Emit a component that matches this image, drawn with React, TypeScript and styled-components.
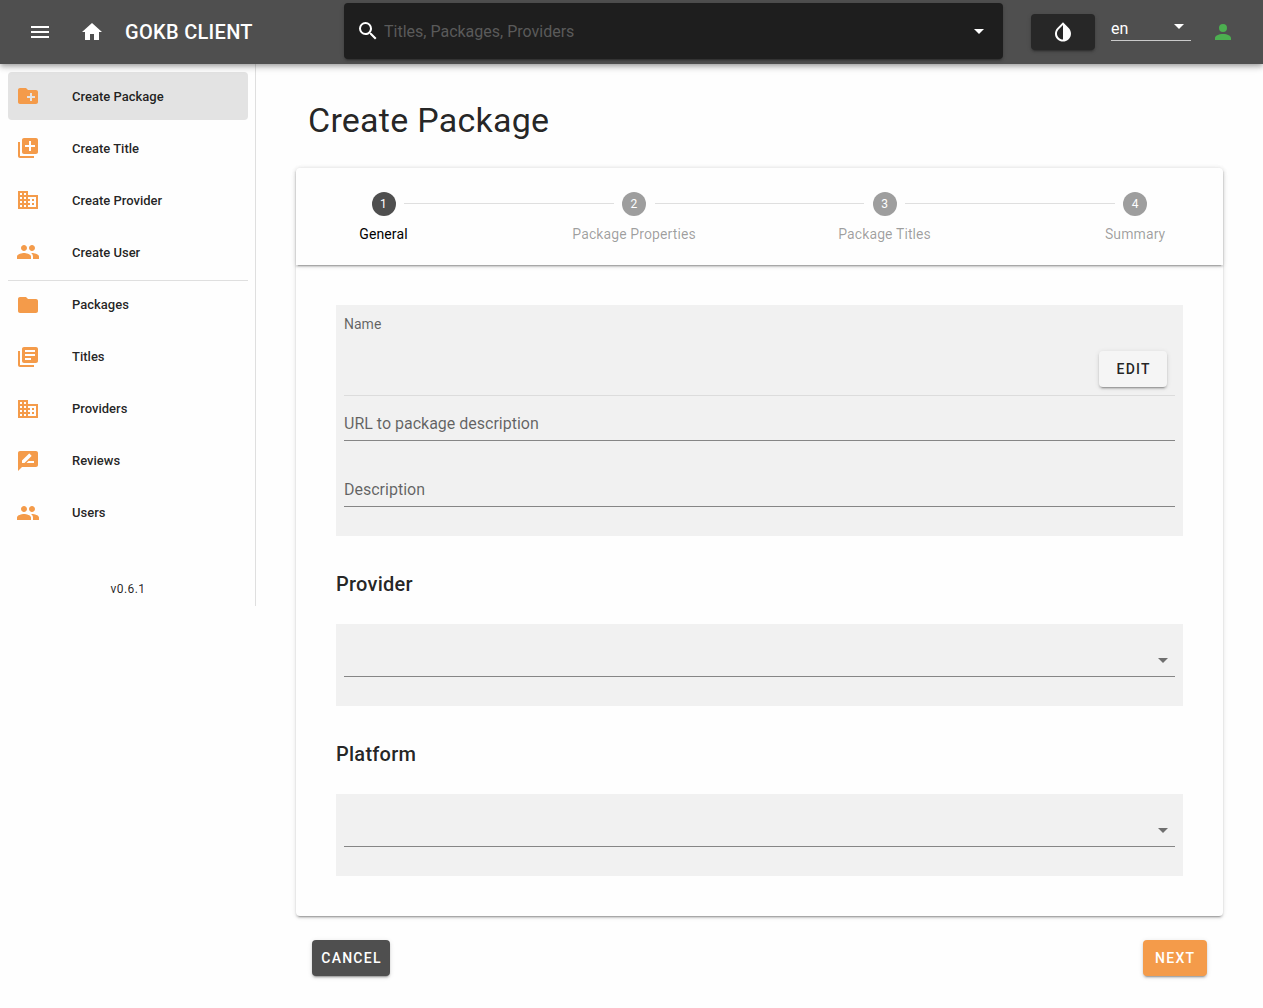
import React from "react";
import styled, { createGlobalStyle } from "styled-components";

const GlobalStyle = createGlobalStyle`
  *, *::before, *::after { box-sizing: border-box; }
  body {
    margin: 0;
    background: #fefefe;
    color: rgba(0, 0, 0, 0.87);
    font-family: Roboto, "Liberation Sans", sans-serif;
    font-size: 16px;
    line-height: 1.5;
  }
  button, input { font-family: inherit; }
`;

const elevation0 =
  "0 0 0 0 rgba(0,0,0,.2), 0 0 0 0 rgba(0,0,0,.14), 0 0 0 0 rgba(0,0,0,.12)";
const elevation2 =
  "0 3px 1px -2px rgba(0,0,0,.2), 0 2px 2px 0 rgba(0,0,0,.14), 0 1px 5px 0 rgba(0,0,0,.12)";
const elevation4 =
  "0 2px 4px -1px rgba(0,0,0,.2), 0 4px 5px 0 rgba(0,0,0,.14), 0 1px 10px 0 rgba(0,0,0,.12)";

const icons = {
  menu: "M3,6H21V8H3V6M3,11H21V13H3V11M3,16H21V18H3V16Z",
  home: "M10,20V14H14V20H19V12H22L12,3L2,12H5V20H10Z",
  search:
    "M9.5,3A6.5,6.5 0 0,1 16,9.5C16,11.11 15.41,12.59 14.44,13.73L14.71,14H15.5L20.5,19L19,20.5L14,15.5V14.71L13.73,14.44C12.59,15.41 11.11,16 9.5,16A6.5,6.5 0 0,1 3,9.5A6.5,6.5 0 0,1 9.5,3M9.5,5C7,5 5,7 5,9.5C5,12 7,14 9.5,14C12,14 14,12 14,9.5C14,7 12,5 9.5,5Z",
  caret: "M7,10L12,15L17,10H7Z",
  invert:
    "M17.66 7.93L12 2.27 6.34 7.93c-3.12 3.12-3.12 8.19 0 11.31C7.9 20.8 9.95 21.58 12 21.58c2.05 0 4.1-.78 5.66-2.34 3.12-3.12 3.12-8.19 0-11.31zM12 19.59c-1.6 0-3.11-.62-4.24-1.76C6.62 16.69 6 15.19 6 13.59s.62-3.11 1.76-4.24L12 5.1v14.49z",
  account:
    "M12,4A4,4 0 0,1 16,8A4,4 0 0,1 12,12A4,4 0 0,1 8,8A4,4 0 0,1 12,4M12,14C16.42,14 20,15.79 20,18V20H4V18C4,15.79 7.58,14 12,14Z",
  newFolder:
    "M20 6h-8l-2-2H4c-1.11 0-1.99.89-1.99 2L2 18c0 1.11.89 2 2 2h16c1.11 0 2-.89 2-2V8c0-1.11-.89-2-2-2zm-1 8h-3v3h-2v-3h-3v-2h3V9h2v3h3v2z",
  libraryAdd:
    "M4 6H2v14c0 1.1.9 2 2 2h14v-2H4V6zm16-4H8c-1.1 0-2 .9-2 2v12c0 1.1.9 2 2 2h12c1.1 0 2-.9 2-2V4c0-1.1-.9-2-2-2zm-1 9h-4v4h-2v-4H9V9h4V5h2v4h4v2z",
  domain:
    "M12 7V3H2v18h20V7H12zM6 19H4v-2h2v2zm0-4H4v-2h2v2zm0-4H4V9h2v2zm0-4H4V5h2v2zm4 12H8v-2h2v2zm0-4H8v-2h2v2zm0-4H8V9h2v2zm0-4H8V5h2v2zm10 12h-8v-2h2v-2h-2v-2h2v-2h-2V9h8v10zm-2-8h-2v2h2v-2zm0 4h-2v2h2v-2z",
  people:
    "M16 11c1.66 0 2.99-1.34 2.99-3S17.66 5 16 5c-1.66 0-3 1.34-3 3s1.34 3 3 3zm-8 0c1.66 0 2.99-1.34 2.99-3S9.66 5 8 5C6.34 5 5 6.34 5 8s1.34 3 3 3zm0 2c-2.33 0-7 1.17-7 3.5V19h14v-2.5c0-2.33-4.67-3.5-7-3.5zm8 0c-.29 0-.62.02-.97.05 1.16.84 1.97 1.97 1.97 3.45V19h6v-2.5c0-2.33-4.67-3.5-7-3.5z",
  folder:
    "M10 4H4c-1.1 0-1.99.9-1.99 2L2 18c0 1.1.9 2 2 2h16c1.1 0 2-.9 2-2V8c0-1.1-.9-2-2-2h-8l-2-2z",
  library:
    "M4 6H2v14c0 1.1.9 2 2 2h14v-2H4V6zm16-4H8c-1.1 0-2 .9-2 2v12c0 1.1.9 2 2 2h12c1.1 0 2-.9 2-2V4c0-1.1-.9-2-2-2zm-1 9H9V9h10v2zm-4 4H9v-2h6v2zm4-8H9V5h10v2z",
  review:
    "M20 2H4c-1.1 0-1.99.9-1.99 2L2 22l4-4h14c1.1 0 2-.9 2-2V4c0-1.1-.9-2-2-2zM6 14v-2.47l6.88-6.88c.2-.2.51-.2.71 0l1.77 1.77c.2.2.2.51 0 .71L8.47 14H6zm12 0h-7.5l2-2H18v2z",
};
type IconName = keyof typeof icons;

const Svg = styled.svg<{ $color: string }>`
  display: block;
  flex: none;
  width: 24px;
  height: 24px;
  fill: ${(p) => p.$color};
`;
const Icon = ({ name, color = "#fff" }: { name: IconName; color?: string }) => (
  <Svg viewBox="0 0 24 24" $color={color} aria-hidden="true">
    <path d={icons[name]} />
  </Svg>
);

/* ---------- app bar ---------- */

const AppBar = styled.header`
  position: relative;
  z-index: 5;
  display: flex;
  align-items: center;
  height: 64px;
  padding: 0 16px;
  background: #4f4f4f;
  color: #fff;
  box-shadow: ${elevation4};
`;
const IconButton = styled.button`
  display: flex;
  flex: none;
  align-items: center;
  justify-content: center;
  width: 48px;
  height: 48px;
  margin-right: 4px;
  padding: 0;
  border: 0;
  border-radius: 50%;
  background: none;
`;
const AppTitle = styled.div`
  flex: none;
  width: 220px;
  padding-left: 5px;
  font-size: 20px;
  font-weight: 500;
  line-height: 30px;
  letter-spacing: 0.3px;
  white-space: nowrap;
`;
const SearchBox = styled.div`
  display: flex;
  flex: none;
  align-items: center;
  gap: 4px;
  width: 659px;
  height: 56px;
  margin: -2px 28px 0 4px;
  padding: 0 12px;
  border-radius: 4px;
  background: #1e1e1e;
  box-shadow: ${elevation2};
`;
const SearchInput = styled.input`
  flex: 1;
  min-width: 0;
  height: 32px;
  padding: 0;
  border: 0;
  outline: 0;
  background: none;
  color: #fff;
  font-size: 16px;
  &::placeholder { color: #5a5a5a; opacity: 1; }
`;
const LanguageSelect = styled.div`
  display: flex;
  flex: none;
  align-items: flex-start;
  justify-content: space-between;
  width: 80px;
  height: 26px;
  margin: -8px 20px 0 16px;
  border-bottom: 1px solid rgba(255, 255, 255, 0.7);
  line-height: 28px;

  svg { margin-top: -1px; }
`;

/* ---------- buttons ---------- */

const Button = styled.button<{
  $bg: string;
  $fg: string;
  $width: number;
  $indent?: number;
}>`
  display: flex;
  flex: none;
  align-items: center;
  justify-content: center;
  width: ${(p) => p.$width}px;
  height: 36px;
  padding: 0 0 0 ${(p) => p.$indent ?? 0}px;
  border: 0;
  border-radius: 4px;
  background: ${(p) => p.$bg};
  color: ${(p) => p.$fg};
  box-shadow: ${elevation2};
  font-size: 14px;
  font-weight: 500;
  letter-spacing: 1.25px;
  text-transform: uppercase;
`;

/* ---------- sidebar ---------- */

const Body = styled.div`
  display: flex;
  align-items: flex-start;
`;
const Sidebar = styled.nav`
  flex: none;
  width: 256px;
  height: 542px;
  padding: 8px 7px 0 8px;
  border-right: 1px solid rgba(0, 0, 0, 0.12);
`;
const NavItem = styled.a<{ $active?: boolean }>`
  display: flex;
  align-items: center;
  gap: 32px;
  height: 48px;
  margin-bottom: 4px;
  padding: 0 8px;
  border-radius: 4px;
  background: ${(p) => (p.$active ? "#e3e3e3" : "transparent")};
  font-size: 13px;
  font-weight: 500;
  line-height: 16px;
`;
const NavLabel = styled.span<{ $offset?: number }>`
  padding-top: ${(p) => p.$offset ?? 0}px;
`;
const NavDivider = styled.hr`
  height: 1px;
  margin: 0;
  border: 0;
  background: rgba(0, 0, 0, 0.12);
`;
const Version = styled.div`
  margin-top: 42px;
  font-size: 12px;
  line-height: 20px;
  letter-spacing: 0.4px;
  text-align: center;
`;

/* ---------- content ---------- */

const Main = styled.main`
  flex: 1;
  min-width: 0;
  padding: 24px 24.35px 24px 24px;
`;
const Card = styled.section`
  border-radius: 4px;
  background: #fefefe;
  box-shadow: ${elevation0};
`;
const PageCard = styled(Card)`
  padding: 0 16px 8px;
`;
const PageTitle = styled.h1`
  margin: 0;
  padding: 12px 12px 28px;
  font-size: 34px;
  font-weight: 400;
  line-height: 40px;
  letter-spacing: 0.25px;
`;
const Stepper = styled.div`
  border-radius: 4px;
  background: #fefefe;
  box-shadow: ${elevation2};
`;
const StepHeader = styled.div`
  display: flex;
  align-items: stretch;
  justify-content: space-between;
  height: 97px;
  border-radius: 4px 4px 0 0;
  box-shadow: ${elevation2};
`;
const Step = styled.div<{ $active: boolean }>`
  display: flex;
  flex: 0 0 175px;
  flex-direction: column;
  align-items: center;
  padding: 24px;
  color: ${(p) => (p.$active ? "#000" : "rgba(0,0,0,.38)")};
  font-size: 14px;
  line-height: 14px;
  letter-spacing: 0.1px;
  white-space: nowrap;
`;
const StepNumber = styled.span<{ $active: boolean }>`
  display: flex;
  align-items: center;
  justify-content: center;
  flex: none;
  width: 24px;
  height: 24px;
  margin-bottom: 11px;
  border-radius: 50%;
  background: ${(p) => (p.$active ? "#4f4f4f" : "#9e9e9e")};
  color: #fff;
  font-size: 12px;
`;
const StepLine = styled.hr`
  flex: 1;
  align-self: flex-start;
  height: 1px;
  margin: 35px -67px 0;
  border: 0;
  background: rgba(0, 0, 0, 0.12);
`;
const StepContent = styled.div`
  display: flex;
  flex-direction: column;
  gap: 8px;
  padding: 24px;
`;
const FormCard = styled(Card)<{ $top?: number }>`
  padding: ${(p) => p.$top ?? 0}px 16px 16px;
`;
const FormTitle = styled.h2`
  margin: 0;
  padding: 8px 0 24px;
  font-size: 20px;
  font-weight: 500;
  line-height: 32px;
  letter-spacing: 0.25px;
`;
const FieldPanel = styled.div<{ $height: number }>`
  height: ${(p) => p.$height}px;
  padding: 0 8px;
  background: #f1f1f1;
`;
const NameField = styled.div`
  height: 91px;
  padding-top: 9px;
  border-bottom: 1px solid #dcdcdc;
`;
const NameLabel = styled.div`
  color: rgba(0, 0, 0, 0.6);
  font-size: 14px;
  line-height: 20px;
`;
const NameActions = styled.div`
  display: flex;
  justify-content: flex-end;
  padding: 17px 8px 0 0;
`;
const TextField = styled.div<{ $height: number }>`
  display: flex;
  align-items: flex-end;
  height: ${(p) => p.$height}px;
  padding-bottom: 4px;
  border-bottom: 1px solid #868686;
  color: rgba(0, 0, 0, 0.6);
  font-size: 16px;
  line-height: 24px;
`;
const SelectField = styled(TextField)`
  justify-content: flex-end;
`;
const Actions = styled.div`
  display: flex;
  justify-content: space-between;
  padding: 24px 16px 0;
`;

const createLinks: [IconName, string][] = [
  ["newFolder", "Create Package"],
  ["libraryAdd", "Create Title"],
  ["domain", "Create Provider"],
  ["people", "Create User"],
];
const browseLinks: [IconName, string][] = [
  ["folder", "Packages"],
  ["library", "Titles"],
  ["domain", "Providers"],
  ["review", "Reviews"],
  ["people", "Users"],
];
const steps = ["General", "Package Properties", "Package Titles", "Summary"];
const accent = "#f49b4a";

export default function App() {
  return (
    <>
      <GlobalStyle />
      <AppBar>
        <IconButton aria-label="Menu"><Icon name="menu" /></IconButton>
        <IconButton aria-label="Home"><Icon name="home" /></IconButton>
        <AppTitle>GOKB CLIENT</AppTitle>
        <SearchBox>
          <Icon name="search" />
          <SearchInput placeholder="Titles, Packages, Providers" />
          <Icon name="caret" />
        </SearchBox>
        <Button $bg="#272727" $fg="#fff" $width={64} aria-label="Theme">
          <Icon name="invert" />
        </Button>
        <LanguageSelect>
          en
          <Icon name="caret" />
        </LanguageSelect>
        <Icon name="account" color="#4caf50" />
      </AppBar>
      <Body>
        <Sidebar>
          {createLinks.map(([icon, label], i) => (
            <NavItem key={label} $active={i === 0}>
              <Icon name={icon} color={accent} />
              <NavLabel $offset={2}>{label}</NavLabel>
            </NavItem>
          ))}
          <NavDivider />
          {browseLinks.map(([icon, label]) => (
            <NavItem key={label}>
              <Icon name={icon} color={accent} />
              <NavLabel>{label}</NavLabel>
            </NavItem>
          ))}
          <Version>v0.6.1</Version>
        </Sidebar>
        <Main>
          <PageCard>
            <PageTitle>Create Package</PageTitle>
            <Stepper>
              <StepHeader>
                {steps.map((label, i) => (
                  <React.Fragment key={label}>
                    {i > 0 && <StepLine />}
                    <Step $active={i === 0}>
                      <StepNumber $active={i === 0}>{i + 1}</StepNumber>
                      {label}
                    </Step>
                  </React.Fragment>
                ))}
              </StepHeader>
              <StepContent>
                <FormCard $top={16}>
                  <FieldPanel $height={230.6}>
                    <NameField>
                      <NameLabel>Name</NameLabel>
                      <NameActions>
                        <Button $bg="#f5f5f5" $fg="rgba(0,0,0,.87)" $width={68} $indent={2}>
                          Edit
                        </Button>
                      </NameActions>
                    </NameField>
                    <TextField $height={45}>URL to package description</TextField>
                    <TextField $height={66}>Description</TextField>
                  </FieldPanel>
                </FormCard>
                {["Provider", "Platform"].map((title) => (
                  <FormCard key={title}>
                    <FormTitle>{title}</FormTitle>
                    <FieldPanel $height={82}>
                      <SelectField $height={53}>
                        <Icon name="caret" color="rgba(0,0,0,.54)" />
                      </SelectField>
                    </FieldPanel>
                  </FormCard>
                ))}
              </StepContent>
            </Stepper>
            <Actions>
              <Button $bg="#4f4f4f" $fg="#fff" $width={78} $indent={1}>Cancel</Button>
              <Button $bg={accent} $fg="#fff" $width={64} $indent={1}>Next</Button>
            </Actions>
          </PageCard>
        </Main>
      </Body>
    </>
  );
}
